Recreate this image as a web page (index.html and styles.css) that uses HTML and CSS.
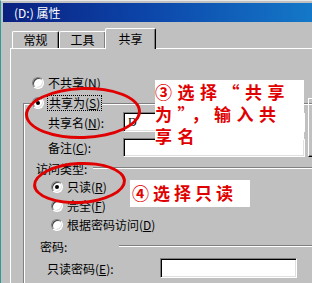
FILE: index.html
```html
<!DOCTYPE html>
<html lang="zh-CN">
  <head>
    <meta charset="UTF-8" />
    <title>(D:) 属性</title>
    <link rel="stylesheet" href="styles.css">
  </head>
  <body>
    <div class="window">
      <div class="titlebar">(D:) 属性</div>

      <div class="tabs">
        <div class="tab">常规</div>
        <div class="tab">工具</div>
        <div class="tab tab-active">共享</div>
      </div>

      <div class="panel">
        <div class="radio-row">
          <span class="radio"></span>
          <span>不共享(<u>N</u>)</span>
        </div>

        <fieldset class="group">
          <legend class="radio-row">
            <span class="radio radio-on"></span>
            <span class="focus">共享为(<u>S</u>)</span>
          </legend>

          <div class="fields">
            <label class="field-label">共享名(<u>N</u>):</label>
            <div class="input">D</div>
            <div class="side-btn"></div>
            <label class="field-label">备注(<u>C</u>):</label>
            <div class="input"></div>
          </div>

          <div class="section">访问类型:</div>
          <div class="options">
            <div class="radio-row">
              <span class="radio radio-on"></span>
              <span>只读(<u>R</u>)</span>
            </div>
            <div class="radio-row">
              <span class="radio"></span>
              <span>完全(<u>F</u>)</span>
            </div>
            <div class="radio-row">
              <span class="radio"></span>
              <span>根据密码访问(<u>D</u>)</span>
            </div>
          </div>

          <div class="section section-pwd">密码:</div>
          <div class="pwd-row">
            <label class="pwd-label">只读密码(<u>E</u>):</label>
            <div class="input input-pwd"></div>
          </div>
        </fieldset>
      </div>
    </div>

    <!-- red marks drawn over the dialog -->
    <div class="ring ring-1"></div>
    <div class="ring ring-2"></div>
    <div class="note note-1">③选择“共享<br>为”，输入共<br>享名</div>
    <div class="note note-2">④选择只读</div>
  </body>
</html>
```

FILE: styles.css
```css
body {
  margin: 0;
  width: 312px;
  height: 283px;
  overflow: hidden;
  position: relative;
  background-color: #c0c0c0;
  font-family: "Noto Sans CJK SC", "Liberation Sans", sans-serif;
  font-size: 12px;
  color: #000;
}

u {
  text-decoration: underline;
}

.window {
  height: 100%;
  overflow: hidden;
  border-left: 1px solid #2f9a9a;
  border-top: 1px solid #e8e8e8;
  padding: 2px 0 0 2px;
  box-sizing: border-box;
}

.titlebar {
  height: 19px;
  padding-left: 11px;
  display: flex;
  align-items: center;
  color: #fff;
  background: linear-gradient(to right, #0a2080, #0c44a8 45%, #1478c8);
}

.tabs {
  display: flex;
  align-items: flex-end;
  height: 20px;
  margin-top: 6px;
  padding-left: 9px;
  position: relative;
  z-index: 1;
}

.tab {
  width: 47px;
  height: 17px;
  box-sizing: border-box;
  border-top: 1px solid #fff;
  border-left: 1px solid #fff;
  border-right: 1px solid #000;
  border-radius: 2px 2px 0 0;
  box-shadow: inset -1px 0 0 #808080;
  display: flex;
  align-items: center;
  justify-content: center;
  line-height: 1;
}

.tab-active {
  width: 51px;
  height: 21px;
  margin-left: -1px;
  margin-bottom: -1px;
  background-color: #c0c0c0;
}

.panel {
  margin-left: 7px;
  height: 235px;
  box-sizing: border-box;
  border-top: 1px solid #fff;
  border-left: 1px solid #fff;
  padding: 27px 0 0 21px;
}

.radio-row {
  display: flex;
  align-items: center;
  gap: 4px;
  height: 14px;
  line-height: 14px;
}

.radio {
  width: 12px;
  height: 12px;
  box-sizing: border-box;
  border-radius: 50%;
  border: 1px solid;
  border-color: #808080 #fff #fff #808080;
  background-color: #fff;
  box-shadow: inset 1px 1px 0 #404040, inset -1px -1px 0 #dfdfdf;
  display: flex;
  align-items: center;
  justify-content: center;
}

.radio-on::after {
  content: "";
  width: 4px;
  height: 4px;
  border-radius: 50%;
  background-color: #000;
}

.focus {
  outline: 1px dotted #000;
  padding: 0 1px;
}

.group {
  margin: 6px 0 0 -9px;
  padding: 2px 0 0 24px;
  height: 190px;
  border: none;
  border-top: 1px solid #808080;
  border-left: 1px solid #808080;
  box-shadow: inset 1px 1px 0 #fff;
}

.group legend {
  padding: 0 1px;
  margin-left: -17px;
  background-color: #c0c0c0;
}

.fields {
  display: grid;
  grid-template-columns: 72px 182px 7px;
  grid-template-rows: 20px 19px;
  column-gap: 3px;
  row-gap: 6px;
  align-items: center;
}

.side-btn {
  grid-column: 3;
  grid-row: 1 / 3;
  align-self: stretch;
  margin-top: -14px;
  border-top: 1px solid #fff;
  border-left: 1px solid #fff;
  border-bottom: 1px solid #000;
  box-shadow: inset 0 -1px 0 #808080;
}

.input {
  height: 100%;
  box-sizing: border-box;
  border: 1px solid;
  border-color: #808080 #fff #fff #808080;
  box-shadow: inset 1px 1px 0 #000, inset -1px -1px 0 #dfdfdf;
  background-color: #fff;
  padding: 2px 4px;
  line-height: 14px;
  font-family: "Liberation Serif", serif;
}

.section {
  display: flex;
  align-items: center;
  gap: 6px;
  margin: 4px 0 0 -12px;
  height: 14px;
}

.section::after {
  content: "";
  flex: 1;
  height: 0;
  border-top: 1px solid #808080;
  border-bottom: 1px solid #fff;
}

.options {
  margin: 5px 0 0 3px;
  display: flex;
  flex-direction: column;
  gap: 5px;
}

.section-pwd {
  margin: 7px 0 0 -8px;
}

.section-pwd::after {
  margin-left: 46px;
}

.pwd-row {
  display: flex;
  align-items: center;
  margin: 5px 0 0 -1px;
  height: 20px;
}

.pwd-label {
  width: 113px;
}

.input-pwd {
  width: 137px;
}

/* annotations */
.ring {
  position: absolute;
  border: 3px solid #e00000;
  border-radius: 50%;
  box-sizing: border-box;
}

.ring-1 {
  left: 25px;
  top: 87px;
  width: 116px;
  height: 52px;
  transform: rotate(-2deg);
}

.ring-2 {
  left: 33px;
  top: 162px;
  width: 93px;
  height: 42px;
  transform: rotate(-3deg);
}

.note {
  position: absolute;
  background-color: #fff;
  color: #e00000;
  font-weight: 700;
  font-size: 17px;
  line-height: 22px;
  box-sizing: border-box;
  white-space: nowrap;
}

.note-1 {
  left: 155px;
  top: 80px;
  width: 149px;
  height: 60px;
  padding-top: 1px;
  letter-spacing: 5.5px;
}

.note-2 {
  left: 130px;
  top: 180px;
  width: 120px;
  height: 27px;
  padding: 2px 0 0 2px;
  letter-spacing: 4px;
}
```
